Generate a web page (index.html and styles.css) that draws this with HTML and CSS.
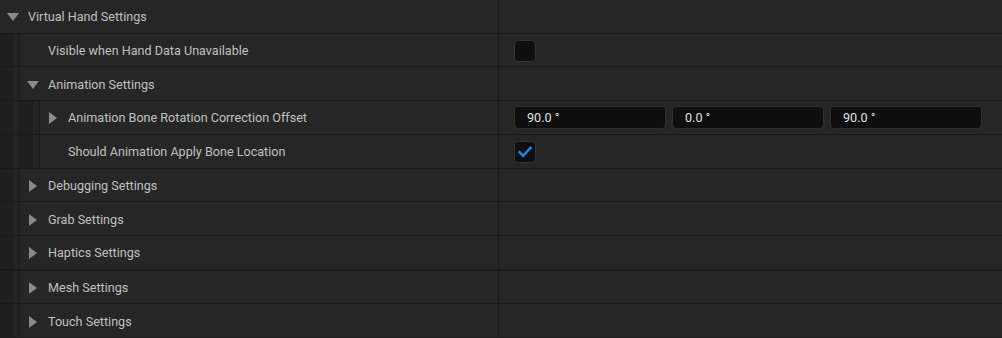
FILE: index.html
```html
<!DOCTYPE html>
<html>
<head>
<meta charset="utf-8">
<link rel="stylesheet" href="styles.css">
</head>
<body>
<div class="panel">
  <div class="row">
    <div class="left">
      <div class="name"><span class="arrow down"><svg width="12" height="8" viewBox="0 0 12 8"><polygon points="0,0 12,0 6,8" fill="#8a8a8a"/></svg></span><span class="label">Virtual Hand Settings</span></div>
    </div>
    <div class="value"></div>
  </div>
  <div class="row">
    <div class="left">
      <div class="indent"></div>
      <div class="name"><span class="arrow"></span><span class="label">Visible when Hand Data Unavailable</span></div>
    </div>
    <div class="value"><span class="check"></span></div>
  </div>
  <div class="row">
    <div class="left">
      <div class="indent"></div>
      <div class="name"><span class="arrow down"><svg width="12" height="8" viewBox="0 0 12 8"><polygon points="0,0 12,0 6,8" fill="#8a8a8a"/></svg></span><span class="label">Animation Settings</span></div>
    </div>
    <div class="value"></div>
  </div>
  <div class="row">
    <div class="left">
      <div class="indent"></div>
      <div class="indent"></div>
      <div class="name"><span class="arrow"><svg width="8" height="12" viewBox="0 0 8 12"><polygon points="0,0 8,6 0,12" fill="#8a8a8a"/></svg></span><span class="label">Animation Bone Rotation Correction Offset</span></div>
    </div>
    <div class="value fields">
      <div class="field">90.0 °</div>
      <div class="field">0.0 °</div>
      <div class="field">90.0 °</div>
    </div>
  </div>
  <div class="row">
    <div class="left">
      <div class="indent"></div>
      <div class="indent"></div>
      <div class="name"><span class="arrow"></span><span class="label">Should Animation Apply Bone Location</span></div>
    </div>
    <div class="value"><span class="check"><svg width="14" height="12" viewBox="0 0 14 12"><path d="M1.5 6.2 L5.2 9.8 L12.5 1.8" fill="none" stroke="#1c82e0" stroke-width="2.6" stroke-linecap="square"/></svg></span></div>
  </div>
  <div class="row">
    <div class="left">
      <div class="indent"></div>
      <div class="name"><span class="arrow"><svg width="8" height="12" viewBox="0 0 8 12"><polygon points="0,0 8,6 0,12" fill="#8a8a8a"/></svg></span><span class="label">Debugging Settings</span></div>
    </div>
    <div class="value"></div>
  </div>
  <div class="row">
    <div class="left">
      <div class="indent"></div>
      <div class="name"><span class="arrow"><svg width="8" height="12" viewBox="0 0 8 12"><polygon points="0,0 8,6 0,12" fill="#8a8a8a"/></svg></span><span class="label">Grab Settings</span></div>
    </div>
    <div class="value"></div>
  </div>
  <div class="row thick">
    <div class="left">
      <div class="indent"></div>
      <div class="name"><span class="arrow"><svg width="8" height="12" viewBox="0 0 8 12"><polygon points="0,0 8,6 0,12" fill="#8a8a8a"/></svg></span><span class="label">Haptics Settings</span></div>
    </div>
    <div class="value"></div>
  </div>
  <div class="row">
    <div class="left">
      <div class="indent"></div>
      <div class="name"><span class="arrow"><svg width="8" height="12" viewBox="0 0 8 12"><polygon points="0,0 8,6 0,12" fill="#8a8a8a"/></svg></span><span class="label">Mesh Settings</span></div>
    </div>
    <div class="value"></div>
  </div>
  <div class="row">
    <div class="left">
      <div class="indent"></div>
      <div class="name"><span class="arrow"><svg width="8" height="12" viewBox="0 0 8 12"><polygon points="0,0 8,6 0,12" fill="#8a8a8a"/></svg></span><span class="label">Touch Settings</span></div>
    </div>
    <div class="value"></div>
  </div>
</div>
</body>
</html>
```
FILE: styles.css
```css
html, body {
  margin: 0;
  padding: 0;
  background: #1a1a1a;
}
.panel {
  width: 1002px;
  height: 338px;
  box-sizing: border-box;
  padding-bottom: 1px;
  display: flex;
  flex-direction: column;
  gap: 1px;
  background: #1a1a1a;
  font-family: Roboto, "Liberation Sans", sans-serif;
  font-size: 12.6px;
  color: #c0c0c0;
}
.row {
  flex: 1;
  display: flex;
  gap: 1px;
  min-height: 0;
}
.row.thick {
  margin-bottom: 1px;
}
.left {
  width: 498px;
  display: flex;
  flex-shrink: 0;
}
.indent {
  width: 20px;
  flex-shrink: 0;
  background: linear-gradient(to right, #1f1f1f 0 13px, #232323 13px 19px, #1a1a1a 19px 20px);
}
.name {
  flex: 1;
  display: flex;
  align-items: center;
  padding-left: 7px;
  padding-top: 2px;
  background: #262626;
  white-space: nowrap;
  overflow: hidden;
}
.arrow {
  width: 12px;
  height: 12px;
  margin-right: 9px;
  display: flex;
  align-items: center;
  justify-content: center;
  flex-shrink: 0;
}
.label {
  line-height: 14px;
}
.value {
  flex: 1;
  background: #262626;
  display: flex;
  align-items: center;
  padding-left: 15px;
  padding-right: 20px;
  padding-top: 1px;
}
.check {
  width: 22px;
  height: 22px;
  box-sizing: border-box;
  background: #0f0f0f;
  border: 1px solid #333333;
  border-radius: 4px;
  display: flex;
  align-items: center;
  justify-content: center;
}
.fields {
  gap: 6px;
}
.field {
  flex: 1;
  height: 23px;
  box-sizing: border-box;
  background: #0f0f0f;
  border: 1px solid #2e2e2e;
  border-radius: 4px;
  padding-left: 12px;
  display: flex;
  align-items: center;
  color: #e0e0e0;
  font-size: 12.6px;
}
```
